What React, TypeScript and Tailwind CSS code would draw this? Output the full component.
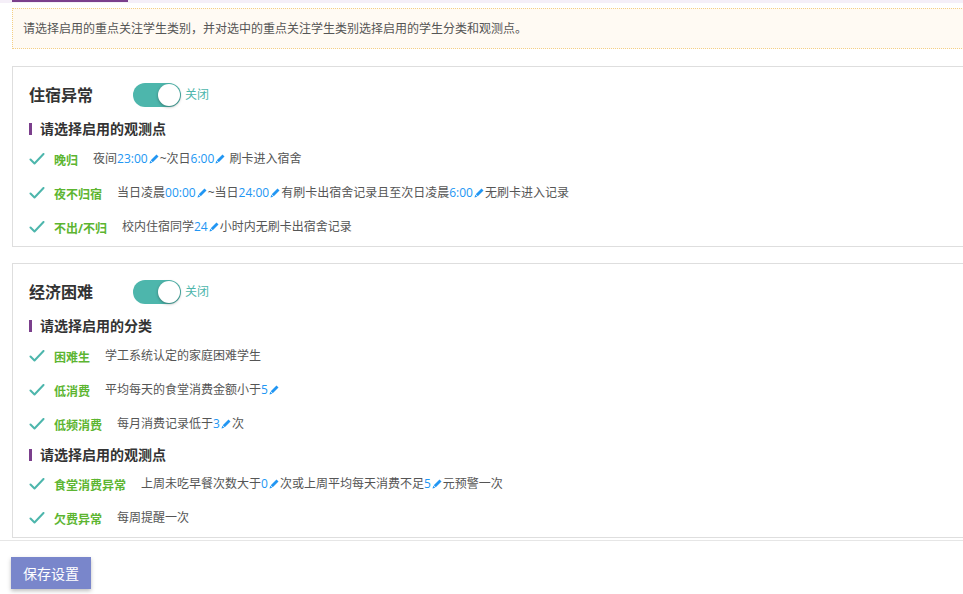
import React from 'react';

const font = { fontFamily: '"Open Sans", "Noto Sans CJK SC", sans-serif' };

const Pencil = () => (
  <svg viewBox="0 0 12 12" className="inline-block w-[10px] h-[10px] mx-[1px] align-[-1px]" fill="#2196f3">
    <path d="M9 0.6l2.4 2.4-6.9 6.9-2.4-2.4z" />
    <path d="M1.6 8.1l2.3 2.3-3.3 1z" />
  </svg>
);

const Check = () => (
  <svg viewBox="0 0 16 12" className="w-[16px] h-[12px] shrink-0" fill="none" stroke="#4db6ac" strokeWidth="2" strokeLinecap="round" strokeLinejoin="round">
    <path d="M1.5 6.5l4 4 9-9.5" />
  </svg>
);

const V = ({ children }: { children: React.ReactNode }) => (
  <>
    <span className="text-[#2196f3]">{children}</span>
    <Pencil />
  </>
);

type Row = { label: string; desc: React.ReactNode };

const Toggle = () => (
  <div className="flex items-center ml-[40px]">
    <div className="relative w-[48px] h-[24px] rounded-full bg-[#4db6ac]">
      <div className="absolute right-[1px] top-[1px] w-[22px] h-[22px] rounded-full bg-white shadow-[0_1px_3px_rgba(0,0,0,0.35)]" />
    </div>
    <span className="ml-[4px] text-[12px] leading-[16px] text-[#4db6ac]">关闭</span>
  </div>
);

const SubHead = ({ text, className = '' }: { text: string; className?: string }) => (
  <div className={`flex items-center h-[20px] ${className}`}>
    <span className="w-[3px] h-[12px] bg-[#7b3f8c] mr-[8px]" />
    <span className="text-[14px] leading-[20px] font-bold text-[#333]">{text}</span>
  </div>
);

const Rows = ({ rows, className = 'mt-[3px]' }: { rows: Row[]; className?: string }) => (
  <div className={className}>
    {rows.map((r) => (
      <div key={r.label} className="flex items-center h-[34px]">
        <Check />
        <span className="ml-[9px] mr-[15px] text-[12px] leading-[16px] font-bold text-[#5cb531] whitespace-nowrap translate-y-[2px]">
          {r.label}
        </span>
        <span className="text-[12px] leading-[16px] text-[#555] whitespace-nowrap">{r.desc}</span>
      </div>
    ))}
  </div>
);

const Card = ({ title, children }: { title: string; children: React.ReactNode }) => (
  <div className="border border-[#dedede] bg-white pt-[16px] pl-[16px] pb-[2px]">
    <div className="flex items-center h-[24px]">
      <span className="text-[16px] leading-[24px] font-bold text-[#333]">{title}</span>
      <Toggle />
    </div>
    {children}
  </div>
);

export default function App() {
  return (
    <div className="w-[963px] h-[594px] overflow-hidden bg-white" style={font}>
      <div className="w-[1000px]">
        <div className="flex h-[3px] bg-[#f5eff8]">
          <div className="ml-[12px] w-[116px] h-[2px] bg-[#7b3f8c]" />
        </div>
        <div className="pl-[12px] border-b border-[#e6e6e6] pb-[2px]">
          <div className="mt-[5px] h-[41px] flex items-center pl-[10px] border border-dotted border-[#f4cf86] bg-[#fffaf3] text-[12px] text-[#555]">
            请选择启用的重点关注学生类别，并对选中的重点关注学生类别选择启用的学生分类和观测点。
          </div>
          <div className="mt-[17px] flex flex-col gap-[16px]">
            <Card title="住宿异常">
              <SubHead text="请选择启用的观测点" className="mt-[12px]" />
              <Rows
                rows={[
                  { label: '晚归', desc: <>夜间<V>23:00</V>~次日<V>6:00</V> 刷卡进入宿舍</> },
                  {
                    label: '夜不归宿',
                    desc: <>当日凌晨<V>00:00</V>~当日<V>24:00</V>有刷卡出宿舍记录且至次日凌晨<V>6:00</V>无刷卡进入记录</>,
                  },
                  { label: '不出/不归', desc: <>校内住宿同学<V>24</V>小时内无刷卡出宿舍记录</> },
                ]}
              />
            </Card>
            <Card title="经济困难">
              <SubHead text="请选择启用的分类" className="mt-[12px]" />
              <Rows
                rows={[
                  { label: '困难生', desc: <>学工系统认定的家庭困难学生</> },
                  { label: '低消费', desc: <>平均每天的食堂消费金额小于<V>5</V></> },
                  { label: '低频消费', desc: <>每月消费记录低于<V>3</V>次</> },
                ]}
              />
              <SubHead text="请选择启用的观测点" className="mt-[4px]" />
              <Rows
                className="mt-[2px]"
                rows={[
                  {
                    label: '食堂消费异常',
                    desc: <>上周未吃早餐次数大于<V>0</V>次或上周平均每天消费不足<V>5</V>元预警一次</>,
                  },
                  { label: '欠费异常', desc: <>每周提醒一次</> },
                ]}
              />
            </Card>
          </div>
        </div>
        <div className="pl-[11px] pt-[16px]">
          <button className="w-[80px] h-[32px] bg-[#7986cb] text-white text-[14px] shadow-[0_2px_4px_rgba(0,0,0,0.25)]">
            保存设置
          </button>
        </div>
      </div>
    </div>
  );
}
